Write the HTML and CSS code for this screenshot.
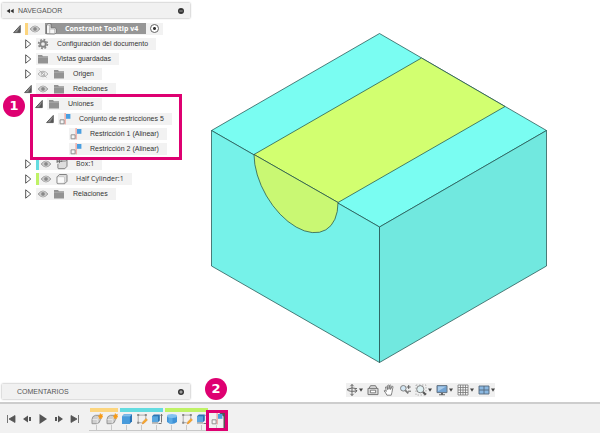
FILE: index.html
```
<!DOCTYPE html>
<html lang="es">
<head>
<meta charset="utf-8">
<meta name="viewport" content="width=device-width, initial-scale=1">
<title>Constraint Tooltip v4</title>
<link rel="stylesheet" href="styles.css">
</head>
<body>
<svg class="sprites" aria-hidden="true">
  <symbol id="open" viewBox="0 0 8 10"><path d="M7.3 1.400v7.200H.6z" fill="#8a8a8a" stroke="#444" stroke-width=".8"/><path d="M7 3.500v4.800H4z" fill="#555"/></symbol>
  <symbol id="closed" viewBox="0 0 8 10"><path d="M1.700 .8v8.400L6.800 5z" fill="#fff" stroke="#555" stroke-width="1"/></symbol>
  <symbol id="eye" viewBox="0 0 12 12"><path d="M1 6q5-6 10 0q-5 6-10 0z" fill="#c4c4c4" stroke="#999" stroke-width=".8"/><circle cx="6" cy="6" r="2.300" fill="#888" stroke="#e6e6e6" stroke-width=".6"/></symbol>
  <symbol id="eye-off" viewBox="0 0 12 12"><path d="M1 6q5-5.6 10 0q-5 5.6-10 0zM2.5 2.6l7 6.8" fill="none" stroke="#aaa" stroke-width=".9"/><circle cx="6" cy="6" r="1.8" fill="none" stroke="#aaa" stroke-width=".8"/></symbol>
  <symbol id="folder" viewBox="0 0 12 12"><path d="M1 2h4l1 1.2h5v7.3H1z" fill="#929292"/><path d="M1 4.3h10" stroke="#b5b5b5" stroke-width=".7"/></symbol>
  <symbol id="gear" viewBox="0 0 12 12"><circle cx="6" cy="6" r="4.4" fill="none" stroke="#858585" stroke-width="1.6" stroke-dasharray="1.8 1.65"/><circle cx="6" cy="6" r="2.8" fill="#eee" stroke="#858585" stroke-width="1.9"/></symbol>
  <symbol id="parts" viewBox="0 0 12 12"><path d="M1.5 10.8V2L3 .7h3v4.1h3.9l1.4 1v3.6L9.7 11z" fill="#f5f5f5" stroke="#666" stroke-width=".8"/><path d="M1.5 2.1h3.2v8.7M4.7 6h5v5M9.7 6l1.6-.5M4.7 2.1L6 .8" fill="none" stroke="#999" stroke-width=".6"/></symbol>
  <symbol id="cube" viewBox="0 0 12 12"><path d="M3.4 1.5h6.8q.8 0 .8.8v6l-2.3 2.4H1.9q-.9 0-.9-.9V3.9z" fill="#ddd" stroke="#777" stroke-width=".9"/><rect x="1.4" y="3.7" width="7.1" height="6.6" rx="1.2" fill="#fafafa" stroke="#aaa" stroke-width=".5"/></symbol>
  <symbol id="pinned" viewBox="0 0 12 12"><path d="M4.7 3h4.6l1.7-1v6.3l-2.2 2.4H2.7q-.8 0-.8-.8V5.8" fill="#ddd" stroke="#777" stroke-width=".9"/><path d="M1.1 1.5v3.4M1.1 3.2h2.2M3.3 1.4v3.7M3.3 3.2h3" stroke="#555" stroke-width=".9"/></symbol>
  <symbol id="align" viewBox="0 0 12 12"><rect x="7" y="1" width="4.4" height="4.800" fill="#4a9fe0"/><path d="M6.100 0v11.400" stroke="#ee8b84" stroke-width="1"/><path d="M1.100 6.800h4v4H1.100z" fill="#f5f5f5" stroke="#888" stroke-width=".9"/></symbol>
  <symbol id="component" viewBox="0 0 12 12"><path d="M1 6.500Q1 3 4.500 2.300h4.800v4.500Q9 10.300 5.500 10.700H1z" fill="#cfcfcf" stroke="#8d8d8d" stroke-width=".9"/><path d="M1.600 6.500h4.700v3.800M6.300 6.500l2.500-2.800" fill="none" stroke="#eee" stroke-width=".8"/><path d="M9.3.4l.7 1.4 1.5-.4-.5 1.5 1 .9-1.4.6-.1 1.6-1.2-1-1.4.6.3-1.5-1.1-1 1.5-.4z" fill="#f79a17" stroke="#f79a17" stroke-width=".5"/></symbol>
  <symbol id="solid" viewBox="0 0 12 12"><path d="M1 3.4L3 1.3h8v7L8.9 10.8H1z" fill="#2874b6"/><path d="M1 3.4h7.9v7.4H1z" fill="#479bdc"/><path d="M1 3.4L3 1.3h8L8.9 3.4z" fill="#80c0ee"/></symbol>
  <symbol id="sketch" viewBox="0 0 12 12"><path d="M2.2 2.1h7.6v4M2.200 2.100v7.600h3.500" fill="none" stroke="#999" stroke-width=".8"/><path d="M1.2 1.1h2v2h-2zM8.8 1.1h2v2h-2zM1.2 8.7h2v2h-2z" fill="#888"/><path d="M6 11l.6-2L10 5.4l1.5 1.5L8 10.4z" fill="#f7a928" stroke="#d07832" stroke-width=".4"/></symbol>
  <symbol id="extrude" viewBox="0 0 12 12"><path d="M1 3.300l1.800-1.800h6v6L7 9.300H1z" fill="#2d75b3"/><path d="M1 3.300h6v5.700H1z" fill="#58a6df"/><path d="M1 9.200h6v1.500H1z" fill="#aaa"/><path d="M10.500 1.300v8.200M9.500 2.500l1-1.200 1 1.200M7.500 10.500h3" fill="none" stroke="#666" stroke-width=".9"/></symbol>
  <symbol id="cylinder" viewBox="0 0 12 12"><path d="M1 3v6q5 3.700 10 0V3z" fill="#3f92d6"/><path d="M2.500 4v6q2 .8 4 .8V4z" fill="#5aaae5"/><ellipse cx="6" cy="3" rx="5" ry="1.900" fill="#83c2f0"/></symbol>
  <symbol id="caret" viewBox="0 0 4 4"><path d="M0 .4h4L2 3.800z" fill="#444"/></symbol>
</svg>

<div class="app">
  <main class="workspace">
    <aside class="sidebar">
      <header class="panel">
        <button class="bare" aria-label="Contraer"><svg class="collapse" viewBox="0 0 8 6"><path d="M4 .7v4.6L.6 3zM7.7.7v4.6L4.3 3z" fill="#333"/></svg></button>
        <h2>NAVEGADOR</h2>
        <button class="bare end" aria-label="Ocultar"><svg class="dot" viewBox="0 0 6 6"><circle cx="3" cy="3" r="3" fill="#333"/><path d="M1.3 3h3.4" stroke="#bbb" stroke-width=".8"/></svg></button>
      </header>

      <ul class="tree">
        <li>
          <div class="row"><button class="bare twist" aria-label="Contraer documento"><svg><use href="#open"/></svg></button>
            <div class="chip"><i class="bar amber"></i><svg class="icon"><use href="#eye"/></svg>
              <span class="selected"><svg class="icon"><use href="#parts"/></svg><b>Constraint Tooltip v4</b></span>
              <input type="radio" checked aria-label="Activar Constraint Tooltip v4"></div></div>
          <ul>
            <li class="row"><button class="bare twist" aria-label="Expandir configuración"><svg><use href="#closed"/></svg></button><div class="chip"><svg class="icon"><use href="#gear"/></svg><span>Configuración del documento</span></div></li>
            <li class="row"><button class="bare twist" aria-label="Expandir vistas"><svg><use href="#closed"/></svg></button><div class="chip"><svg class="icon"><use href="#folder"/></svg><span>Vistas guardadas</span></div></li>
            <li class="row"><button class="bare twist" aria-label="Expandir origen"><svg><use href="#closed"/></svg></button><div class="chip"><svg class="icon"><use href="#eye-off"/></svg><svg class="icon"><use href="#folder"/></svg><span>Origen</span></div></li>
            <li>
              <div class="row"><button class="bare twist" aria-label="Contraer relaciones"><svg><use href="#open"/></svg></button><div class="chip"><svg class="icon"><use href="#eye"/></svg><svg class="icon"><use href="#folder"/></svg><span>Relaciones</span></div></div>
              <ul class="marked">
                <li>
                  <div class="row"><button class="bare twist" aria-label="Contraer uniones"><svg><use href="#open"/></svg></button><div class="chip"><svg class="icon"><use href="#folder"/></svg><span>Uniones</span></div></div>
                  <ul>
                    <li>
                      <div class="row"><button class="bare twist" aria-label="Contraer conjunto"><svg><use href="#open"/></svg></button><div class="chip"><svg class="icon"><use href="#align"/></svg><span>Conjunto de restricciones 5</span></div></div>
                      <ul class="leaves">
                        <li class="row"><div class="chip"><svg class="icon"><use href="#align"/></svg><span>Restricción 1 (Alinear)</span></div></li>
                        <li class="row"><div class="chip"><svg class="icon"><use href="#align"/></svg><span>Restricción 2 (Alinear)</span></div></li>
                      </ul>
                    </li>
                  </ul>
                  <div class="callout"><span class="badge">1</span></div>
                </li>
              </ul>
            </li>
            <li class="row"><button class="bare twist" aria-label="Expandir Box:1"><svg><use href="#closed"/></svg></button><div class="chip"><i class="bar teal"></i><svg class="icon"><use href="#eye"/></svg><svg class="icon"><use href="#pinned"/></svg><span class="part">Box:1</span></div></li>
            <li class="row"><button class="bare twist" aria-label="Expandir Half Cylinder:1"><svg><use href="#closed"/></svg></button><div class="chip"><i class="bar lime"></i><svg class="icon"><use href="#eye"/></svg><svg class="icon"><use href="#cube"/></svg><span class="part">Half Cylinder:1</span></div></li>
            <li class="row"><button class="bare twist" aria-label="Expandir relaciones"><svg><use href="#closed"/></svg></button><div class="chip"><svg class="icon"><use href="#eye"/></svg><svg class="icon"><use href="#folder"/></svg><span>Relaciones</span></div></li>
          </ul>
        </li>
      </ul>

      <footer class="panel comments">
        <h2>COMENTARIOS</h2>
        <button class="bare end" aria-label="Añadir comentario"><svg class="dot" viewBox="0 0 6 6"><circle cx="3" cy="3" r="3" fill="#333"/><path d="M1.3 3h3.4M3 1.3v3.4" stroke="#ddd" stroke-width=".8"/></svg></button>
      </footer>
    </aside>

    <section class="stage">
      <svg class="model" viewBox="190 0 410 383" role="img" aria-label="Box con Half Cylinder">
        <g stroke="#1d4b49" stroke-opacity=".8" stroke-width=".9" stroke-linejoin="round">
          <path d="M211.5 130.5L379.5 33.5 546.5 130.5 379.5 227z" fill="#7afdf2"/>
          <path d="M211.5 130.5L379.5 227V362.5L211.5 266z" fill="#76f2e9"/>
          <path d="M379.5 227L546.5 130.5V266L379.5 362.5z" fill="#71e8df"/>
          <path d="M254 154.5L421.5 58 505 106.5 338 202.5z" fill="#d2ff70"/>
          <path d="M254 154.5A59.2 34.2 60 0 0 338 202.5z" fill="#c9f873"/>
        </g>
      </svg>
      <nav class="viewbar" aria-label="Vista">
        <button class="bare drop" aria-label="Orbitar"><svg class="glyph" viewBox="0 0 12 12"><path d="M6 .5v11M4.4 2.2L6 .5l1.6 1.7M4.4 9.8L6 11.5l1.6-1.7M11 4.7Q6 2.700 1 5.500q2 2.600 9 1.500M8.600 5.300L11 6.800 9 8.800" fill="none" stroke="#666" stroke-width="1"/></svg><svg class="caret"><use href="#caret"/></svg></button>
        <button class="bare" aria-label="Mirar a"><svg class="glyph" viewBox="0 0 12 12"><path d="M1 4.400h10v6.200H1zM2.200 4.200L3.500 1.700h5l1.300 2.500" fill="#ddd" stroke="#777"/><path d="M3.400 6.200h5.200v2.600H3.400z" fill="#fff" stroke="#666" stroke-width=".8"/></svg></button>
        <button class="bare" aria-label="Encuadre"><svg class="glyph" viewBox="0 0 12 12"><path d="M3.9 11.2Q2.8 8.6 1 6.9q.5-1.3 2.3.5L2.5 3q.7-1 1.3 0l.8 2.6V1.5q.7-.9 1.4 0v3.8l.6-4q.9-.7 1.3.2l-.3 4 1.3-3.2q1-.4 1.1.6L8.9 8.5l-.7 2.7z" fill="#fff" stroke="#666" stroke-width=".8"/></svg></button>
        <button class="bare" aria-label="Zoom"><svg class="glyph" viewBox="0 0 12 12"><circle cx="4.3" cy="4.3" r="2.8" fill="#d4e7f4" stroke="#777" stroke-width=".9"/><path d="M6.3 6.3l3 3" stroke="#777" stroke-width="1.8"/><path d="M7.7 3h4M9.7 1v4M9 7.2h3" stroke="#555" stroke-width=".9"/></svg></button>
        <button class="bare drop" aria-label="Ajustar"><svg class="glyph" viewBox="0 0 12 12"><path d="M1 1h10v10H1z" fill="none" stroke="#999" stroke-width=".7" stroke-dasharray="1.5 1.5"/><circle cx="5.3" cy="5.2" r="3.6" fill="#e0f0f3" stroke="#777" stroke-width=".9"/><path d="M8 8l2.8 2.8" stroke="#555" stroke-width="2"/></svg><svg class="caret"><use href="#caret"/></svg></button>
        <button class="bare drop" aria-label="Visualización"><svg class="glyph" viewBox="0 0 12 12"><path d="M1 1.6h10v7H1z" fill="#72a3d2" stroke="#667483"/><path d="M2 2.5h8L2 7.3z" fill="#a9cbe9"/><path d="M5 9h2v1.2h2v1H3v-1h2z" fill="#666"/></svg><svg class="caret"><use href="#caret"/></svg></button>
        <button class="bare drop" aria-label="Rejilla"><svg class="glyph" viewBox="0 0 12 12"><path d="M1 1h10v10H1z" fill="#f7f7f7"/><path d="M1 1h10v10H1zM3.5 1v10M6 1v10M8.5 1v10M1 3.5h10M1 6h10M1 8.500h10" fill="none" stroke="#777" stroke-width=".8"/></svg><svg class="caret"><use href="#caret"/></svg></button>
        <button class="bare drop" aria-label="Ventanas"><svg class="glyph" viewBox="0 0 12 12"><path d="M1 2h10v8H1z" fill="#8bb8e1" stroke="#53667a" stroke-width=".9"/><path d="M6 2v8M1 6h10" stroke="#53667a" stroke-width=".9"/></svg><svg class="caret"><use href="#caret"/></svg></button>
      </nav>
    </section>
  </main>

  <footer class="timeline">
    <div class="player">
      <button class="bare" aria-label="Inicio"><svg viewBox="0 0 10 10"><path d="M1.500 1v8M9 1.500v7L3 5z" fill="#555" stroke="#555" stroke-width=".8"/></svg></button>
      <button class="bare" aria-label="Anterior"><svg viewBox="0 0 10 10"><path d="M6 1.500v7L1 5zM7 3h2v4H7z" fill="#555"/></svg></button>
      <button class="bare" aria-label="Reproducir"><svg viewBox="0 0 10 10"><path d="M1.500 0v10L9 5z" fill="#555"/></svg></button>
      <button class="bare" aria-label="Siguiente"><svg viewBox="0 0 10 10"><path d="M4 1.500v7L9 5zM1 3h2v4H1z" fill="#555"/></svg></button>
      <button class="bare" aria-label="Final"><svg viewBox="0 0 10 10"><path d="M8.500 1v8M1 1.500v7l6-3.500z" fill="#555" stroke="#555" stroke-width=".8"/></svg></button>
    </div>
    <ol class="history">
      <li class="group amber-top"><button class="bare" aria-label="Componente 1"><svg><use href="#component"/></svg></button><button class="bare" aria-label="Componente 2"><svg><use href="#component"/></svg></button></li>
      <li class="group teal-top"><button class="bare" aria-label="Sólido"><svg><use href="#solid"/></svg></button><button class="bare" aria-label="Boceto 1"><svg><use href="#sketch"/></svg></button><button class="bare" aria-label="Extrusión 1"><svg><use href="#extrude"/></svg></button></li>
      <li class="group lime-top"><button class="bare" aria-label="Cilindro"><svg><use href="#cylinder"/></svg></button><button class="bare" aria-label="Boceto 2"><svg><use href="#sketch"/></svg></button><button class="bare" aria-label="Extrusión 2"><svg><use href="#extrude"/></svg></button></li>
      <li class="group current"><svg class="playhead" viewBox="0 0 7 16"><path d="M0 0h7v16H5.500V4.500z" fill="#555"/></svg>
        <button class="bare" aria-label="Restricción"><svg><use href="#align"/></svg></button>
        <div class="callout"><span class="badge">2</span></div></li>
    </ol>
  </footer>
</div>
</body>
</html>
```
FILE: styles.css
```
* { box-sizing: border-box; }
body {
  margin: 0;
  background: #fff;
  color: #333;
  font: 7px/12px "Liberation Sans", sans-serif;
}
.sprites { position: absolute; width: 0; height: 0; }
ul, ol { margin: 0; padding: 0; list-style: none; }
svg { display: block; flex: none; }
.bare {
  display: flex;
  align-items: center;
  padding: 0;
  border: 0;
  background: none;
}

.app { display: flex; flex-direction: column; min-height: 100vh; }
.workspace { display: flex; flex: 1; }

/* Browser panel */
.sidebar {
  display: flex;
  flex-direction: column;
  flex: none;
  width: 190px;
  padding: 3px 0 3px 2px;
}
.panel {
  display: flex;
  align-items: center;
  height: 15px;
  padding: 0 6px 0 4px;
  background: #f1f1f1;
  box-shadow: 0 0 2px #999;
}
.panel h2 { margin: 0 0 0 4px; color: #555; font-size: 7px; font-weight: 400; }
.collapse { width: 8px; height: 6px; }
.end { margin-left: auto; }
.dot { width: 6px; height: 6px; }
.comments { margin-top: auto; }
.comments h2 { margin-left: 11px; }

.tree { padding: 3px 0 0 11px; }
.tree ul { padding-left: 11px; }
.row { display: flex; align-items: center; gap: 4px; height: 15px; }
.tree .leaves { padding-left: 23px; }
.twist svg { width: 8px; height: 10px; }
.chip {
  display: flex;
  align-items: center;
  gap: 4px;
  height: 12px;
  padding: 0 8px 0 1px;
  background: #f2f2f2;
  white-space: nowrap;
}
.chip > span { margin-left: 4px; }
.icon { width: 12px; height: 12px; }
.bar { align-self: stretch; width: 3px; margin: 0 -3px 0 -1px; }
.amber { background: #fcd57e; }
.teal { background: #64dce0; }
.lime { background: #bff266; }
.part { font-family: "Open Sans", sans-serif; }
.chip > .selected {
  display: flex;
  align-items: center;
  gap: 8px;
  height: 11px;
  margin-left: 0;
  padding-right: 8px;
  background: #969696;
  color: #fff;
  font-family: "Open Sans", sans-serif;
}
.chip input {
  appearance: none;
  width: 9px;
  height: 9px;
  margin: 0 -4px 0 0;
  border: 1px solid #666;
  border-radius: 50%;
  background: radial-gradient(circle, #333 0 1px, #fff 2px);
}

/* Numbered callouts */
.marked > li, .current { position: relative; }
.callout { position: absolute; border: 3px solid #de0071; pointer-events: none; }
.marked .callout { inset: -2px 8px -4px -5px; }
.current .callout { inset: 6px -4px 2px -3px; }
.badge {
  position: absolute;
  width: 22px;
  height: 22px;
  border-radius: 50%;
  background: #de0071;
  color: #fff;
  font: bold 13px/22px "DejaVu Sans", sans-serif;
  text-align: center;
}
.marked .badge { top: -2px; left: -30px; }
.current .badge { top: -35px; left: -4px; }

/* Model view */
.stage { display: flex; flex: 1; flex-direction: column; min-width: 0; }
.model { flex: 1; width: 100%; min-height: 0; }
.viewbar {
  display: flex;
  align-items: center;
  align-self: center;
  gap: 4px;
  height: 14px;
  margin: 0 0 5px 51px;
  background: #f0f0f0;
}
.drop { gap: 1px; }
.glyph { width: 12px; height: 12px; }
.caret { width: 4px; height: 4px; }

/* Timeline */
.timeline {
  display: flex;
  height: 31px;
  padding-left: 6px;
  border-top: 2px solid #cdcdcd;
  background: #f1f1f1;
}
.player { display: flex; align-items: center; gap: 6px; margin-right: 9px; }
.player svg { width: 10px; height: 10px; }
.history { display: flex; }
.group { display: flex; padding-top: 9px; }
.group button {
  position: relative;
  flex-direction: column;
  width: 15px;
  height: 18px;
  border-bottom: 1px solid #c8c8c8;
}
.group button svg { width: 12px; height: 12px; }
.group button::after {
  content: "";
  width: 1px;
  height: 5px;
  background: #c8c8c8;
}
.amber-top, .teal-top, .lime-top {
  background-position: 1px 4px;
  background-repeat: no-repeat;
  background-size: calc(100% - 2px) 4px;
}
.amber-top { background-image: linear-gradient(#fcd57e, #fcd57e); }
.teal-top { background-image: linear-gradient(#64dce0, #64dce0); }
.lime-top { background-image: linear-gradient(#bff266, #bff266); }
.playhead { position: absolute; top: 8px; right: -1px; width: 7px; height: 16px; }
```
